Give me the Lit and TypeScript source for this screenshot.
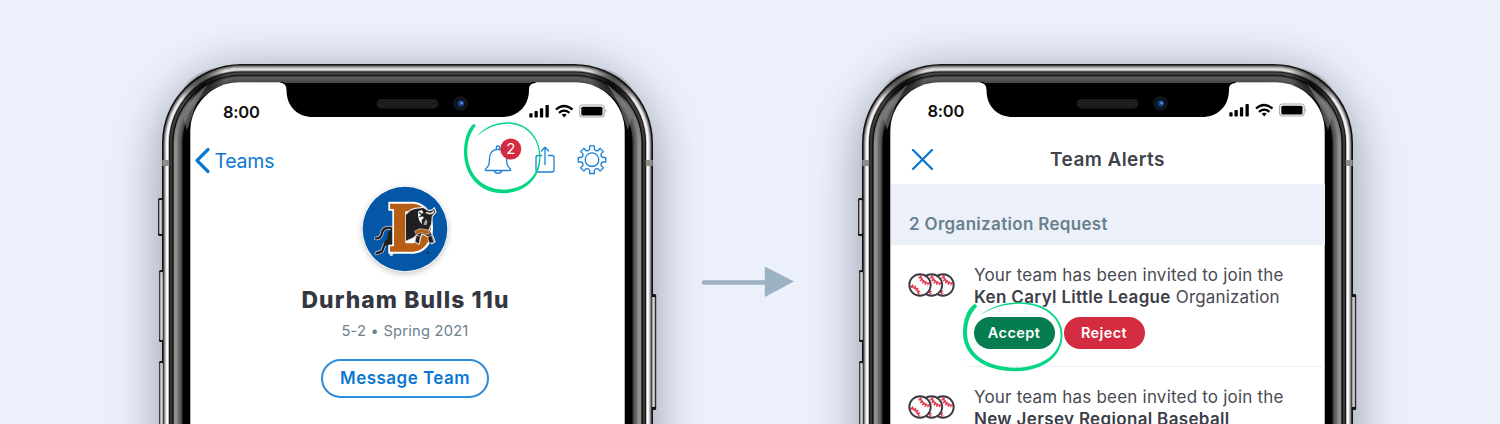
import { LitElement, html, css, svg } from "lit";
import { customElement, property } from "lit/decorators.js";

const BASE = css`
  :host { display: block; box-sizing: border-box; font-family: Inter, "Liberation Sans", sans-serif; white-space: nowrap; }
  * { box-sizing: border-box; }
  svg { display: block; overflow: visible; }
`;

// Bezel bands from outside to inside: x inset, y inset, top colour, side colour
const BANDS: [number, number, string, string][] = [
  [0, 0, "#151515", "#111111"],
  [1.6, 1.6, "#6c6a68", "#77757a"],
  [2.6, 2.4, "#93918f", "#a9a7a6"],
  [3.4, 3.6, "#cccac8", "#d8d8d8"],
  [4.4, 5, "#e4e3e2", "#ffffff"],
  [6.2, 6.6, "#8a8a8a", "#c0c0c0"],
  [6.9, 7.4, "#1a1a1a", "#101010"],
  [7.8, 8.4, "#4a4a4a", "#373737"],
  [10.3, 10.6, "#1c1c1c", "#050505"],
  [11.6, 12, "#3f3f3f", "#8b8b8b"],
  [13.2, 13, "#555555", "#929292"],
  [14.8, 14, "#5a5a5a", "#7d7d7d"],
  [16.2, 15, "#555555", "#6a6a6a"],
  [17.6, 16, "#505050", "#575757"],
  [19, 17, "#4c4c4c", "#444444"],
  [20.4, 18.1, "#161616", "#000000"],
  [28.3, 18.3, "#ffffff", "#ffffff"],
];

@customElement("phone-frame")
export class PhoneFrame extends LitElement {
  static styles = [BASE, css`
    :host { width: 491px; height: 700px; display: grid; flex: none; }
    .bezel, .screen { grid-area: 1 / 1; }
    .bezel { width: 491px; height: 700px; border-radius: 84px; box-shadow: 0 16px 52px rgba(62, 72, 92, .36), 0 0 40px rgba(62, 72, 92, .2); }
    .screen { padding: 18px 28px; position: relative; }
  `];

  render() {
    const last = BANDS.length - 1;
    return html`
      <svg class="bezel" viewBox="0 0 491 700">
        <defs>
          ${BANDS.map(([, , top, side], i) => svg`
            <linearGradient id="b${i}" gradientUnits="userSpaceOnUse" x1="0" y1="8" x2="0" y2="80">
              <stop offset="0" stop-color=${top}></stop><stop offset="1" stop-color=${side}></stop>
            </linearGradient>`)}
          <linearGradient id="key" x1="0" x2="1"><stop offset="0" stop-color="#777"></stop><stop offset=".5" stop-color="#d4d4d0"></stop><stop offset="1" stop-color="#999"></stop></linearGradient>
          <radialGradient id="shade"><stop offset="0" stop-color="#000" stop-opacity=".85"></stop><stop offset=".45" stop-color="#000" stop-opacity=".55"></stop><stop offset="1" stop-color="#000" stop-opacity="0"></stop></radialGradient>
          <pattern id="mesh" width="2" height="2" patternUnits="userSpaceOnUse"><rect width="2" height="2" fill="#191919"></rect><rect width="1" height="1" fill="#2a2a2a"></rect></pattern>
        </defs>
        ${[[-4, 134, 38], [-3, 206, 72], [-3, 297, 72]].map(([x, y, h]) => svg`
          <rect x=${x} y=${y} width="6" height=${h} rx="1.5" fill="#161616"></rect>`)}
        <rect x="488" y="230" width="6.2" height="116" rx="1.5" fill="#161616"></rect>
        ${BANDS.slice(0, last).map(([dx, dy], i) => {
          const r = 79 - dx * 1.02;
          return svg`<rect x=${dx} y=${dy} width=${491 - 2 * dx} height=${700 - 2 * dy} rx=${r} ry=${r + (dx - dy)} fill="url(#b${i})"></rect>`;
        })}
        ${[[-3.2, 136, 34], [-2.4, 208, 68], [-2.4, 299, 68], [489.8, 233, 110]].map(([x, y, h]) => svg`
          <rect x=${x} y=${y} width="3.400" height=${h} rx="1" fill="url(#key)"></rect>`)}
        <ellipse cx="41" cy="21" rx="26" ry="13" fill="url(#shade)" transform="rotate(-32 41 21)"></ellipse>
        <ellipse cx="450" cy="21" rx="26" ry="13" fill="url(#shade)" transform="rotate(32 450 21)"></ellipse>
        <path d="M21 53C26 39 34 30 46 20C40 29 34 38 30 52L25 66Z" fill="#8c8c8c" opacity=".55"></path>
        <path d="M470 53C465 39 457 30 445 20C451 29 457 38 461 52L466 66Z" fill="#8c8c8c" opacity=".55"></path>
        <rect x="28.300" y="18.300" width="434.400" height="670" rx="49" fill="#fff"></rect>
        <rect x=".3" y="96" width="7" height="6" fill="#8f8d8c"></rect>
        <rect x="483.700" y="96" width="7" height="6" fill="#8f8d8c"></rect>
        <path d="M118 18H373.500V19Q367 19 367 25.500C367 43 355 53 340 53H151C136 53 124.500 43 124.500 26Q124.500 19 118 18.500Z" fill="#000"></path>
        <path d="M122 18.200H369.500" stroke="#484848" stroke-width="1.400"></path>
        <rect x="214.500" y="35" width="62" height="9.500" rx="4.700" fill="url(#mesh)"></rect>
        <circle cx="298.500" cy="39.500" r="7.300" fill="#13161b"></circle>
        <circle cx="298.500" cy="39.500" r="5" fill="#0a1224"></circle>
        <circle cx="298.800" cy="39.500" r="3.200" fill="#173c78"></circle>
        <circle cx="299.600" cy="39" r="1.500" fill="#4b8de0"></circle>
      </svg>
      <div class="screen"><slot></slot></div>
    `;
  }
}

@customElement("status-bar")
export class StatusBar extends LitElement {
  @property() time = "8:00";
  static styles = [BASE, css`
    :host { height: 60px; display: flex; align-items: center; justify-content: space-between; padding: 0 18px 0 33px; }
    .time { font-size: 16.500px; line-height: 20px; font-weight: 600; color: #111; letter-spacing: -.25px; }
    .icons { width: 78px; height: 16px; margin-top: -3px; }
  `];
  render() {
    return html`
      <span class="time">${this.time}</span>
      <svg class="icons" viewBox="0 0 78 16">
        <rect x="0.300" y="10.200" width="3.300" height="4.300" rx=".8"></rect>
        <rect x="5.500" y="8" width="3.300" height="6.500" rx=".8"></rect>
        <rect x="10.900" y="5.200" width="3.300" height="9.300" rx=".8"></rect>
        <rect x="16.500" y="2" width="3.300" height="12.500" rx=".8"></rect>
        <g fill="none" stroke="#000" stroke-width="2.300">
          <path d="M27 6.500Q35 -.5 43.500 6.500"></path><path d="M30 9.800Q35.200 5.500 40.500 9.800"></path>
        </g>
        <path d="M32.700 11.600Q35.200 9.800 37.700 11.600L35.200 14.400Z"></path>
        <rect x="50.600" y="2" width="24.600" height="12" rx="3" fill="none" stroke="#a9a9a9" stroke-width="1.100"></rect>
        <rect x="52.300" y="3.700" width="21.200" height="8.700" rx="1.500"></rect>
        <path d="M76.300 6Q78.200 8 76.300 10Z" fill="#a9a9a9"></path>
      </svg>`;
  }
}

@customElement("bulls-logo")
export class BullsLogo extends LitElement {
  static styles = [BASE, css`
    :host { width: 86px; height: 86px; border-radius: 50%; box-shadow: 0 2px 6px rgba(0, 0, 0, .22); }
  `];
  render() {
    return html`
      <svg width="86" height="86" viewBox="67 32 258 258">
        <circle cx="196" cy="161" r="127" fill="#0456a6"></circle>
        <g stroke-linejoin="round" stroke-linecap="round">
          <g fill="none" stroke="#d5d8dd" stroke-width="11">
            <path d="M158 160C145 153 130 158 127 172C125 184 119 190 109 189"></path>
            <path d="M160 192L135 207L127 228L110 234"></path><path d="M158 212L152 224L155 237"></path>
          </g>
          <g fill="none" stroke="#221f20" stroke-width="7">
            <path d="M158 160C145 153 130 158 127 172C125 184 119 190 109 189"></path>
            <path d="M160 192L135 207L127 228L110 234"></path>
          </g>
          <path d="M158 158L146 170L143 190L132 202L137 212L158 208Z" fill="#221f20"></path>
          <path d="M146 79H216C257 79 280 111 280 157C280 205 256 235 216 235H146V208H158V106H146Z" fill="#fff"></path>
          <path d="M151 85H216C252 85 274 114 274 157C274 201 251 229 216 229H151V213H163V101H151Z" fill="#b65d16"></path>
          <path d="M197 108H222C238 115 246 134 246 157C246 181 237 204 217 204H197Z" fill="#fff"></path>
          <path d="M202 114Q209 103 226 99L250 96L268 106Q280 105 284 97L289 110L278 123L276 146L269 162L281 185L286 200L276 205L264 184L246 176L238 207L229 202L230 180L221 188L202 195Z" fill="#221f20" stroke="#e9e5df" stroke-width="3.500"></path>
          <path d="M199 118L216 107V187L199 196Z" fill="#221f20"></path>
          <path d="M236 108L246 104L251 111L244 119L253 127L246 134L247 147L239 136L235 121Z" fill="#fff"></path>
          <path d="M240 112L248 120L241 124M254 124L263 136" fill="none" stroke="#221f20" stroke-width="4"></path>
          <path d="M261 112Q277 119 282 108" fill="none" stroke="#ddd" stroke-width="5"></path>
          <path d="M258 131L264 139L260 150L251 148Z" fill="#a9a6a2"></path>
          <path d="M226 167L240 160L267 164L269 176L252 177L246 171L231 178Z" fill="#b65d16" stroke="#ddd" stroke-width="2"></path>
          <path d="M230 181L226 200L238 206L242 184ZM264 185L268 203L283 202L276 181Z" fill="#221f20" stroke="#ddd" stroke-width="2"></path>
        </g>
        <circle cx="264" cy="232" r="4.500" fill="#17304f"></circle>
      </svg>`;
  }
}

@customElement("team-screen")
export class TeamScreen extends LitElement {
  static styles = [BASE, css`
    :host { width: 435px; }
    .nav { height: 38px; display: flex; align-items: center; padding: 0 18px 0 4px; color: #0b77d1; }
    .back { display: flex; align-items: center; gap: 4.500px; font-size: 19.500px; letter-spacing: -.25px; flex: 1; }
    .profile { display: flex; flex-direction: column; align-items: center; padding: 6px 5px 0 0; }
    .name { margin-top: 13.500px; font-size: 22.800px; line-height: 28px; font-weight: 800; color: #353740; letter-spacing: 1.120px; margin-right: -1px; }
    .record { margin-top: 7.500px; font-size: 14.700px; line-height: 20px; color: #6c818e; letter-spacing: .22px; }
    .message { margin-top: 18px; width: 168px; height: 38.500px; border: 2px solid #2f8cd9; border-radius: 20px; background: #fff; color: #0b77d1; font: 600 17px/35px Inter, sans-serif; letter-spacing: .46px; padding: 0; text-align: center; }
    .mark { position: absolute; left: 0; top: 0; width: 491px; height: 360px; pointer-events: none; }
  `];
  render() {
    return html`
      <status-bar></status-bar>
      <div class="nav">
        <span class="back">
          <svg width="16" height="26" viewBox="0 0 16 26"><path d="M14 1.500L3 12.500L14 23.500" fill="none" stroke="#0b77d1" stroke-width="3.200" stroke-linecap="round" stroke-linejoin="round"></path></svg>Teams</span>
        <svg width="123" height="38" viewBox="484 142 123 38" fill="none" stroke="#1c80d5" stroke-width="1.300" stroke-linejoin="round" stroke-linecap="round">
          <path d="M496.300 149.500V147.600Q496.300 146 498 146T499.800 147.600V149.500"></path>
          <path d="M485.700 170.500Q485 170 485.700 168.800C489.500 165.500 489.200 163.500 489.500 158C490 152.500 493 149.300 498 149.300S506 152.500 506.500 158C506.800 163.500 506.500 165.500 510.300 168.800Q511 170 510.300 170.500Z"></path>
          <path d="M494.300 170.800Q495 173.300 498 173.300T501.700 170.800"></path>
          <path d="M541.500 155.500H538Q536 155.500 536 157.500V170Q536 172 538 172H552Q554 172 554 170V157.500Q554 155.500 552 155.500H548.500M545 164.500V147.500M541.300 151L545 147.200L548.700 151"></path>
          <circle cx="592" cy="159.700" r="6.800"></circle>
          <path d=${gearPath(592, 159.7, 11, 14, 8)}></path>
          <circle cx="510.800" cy="149" r="10.500" fill="#d32b40" stroke="none"></circle>
          <text x="510.800" y="154.300" text-anchor="middle" font-size="15" fill="#fff" stroke="none">2</text>
        </svg>
      </div>
      <div class="profile">
        <bulls-logo></bulls-logo>
        <div class="name">Durham Bulls 11u</div>
        <div class="record">5-2 • Spring 2021</div>
        <button class="message">Message Team</button>
      </div>
      <svg class="mark" viewBox="162 64 491 360"><path fill="#04d684" d="M473.500 124C467 129 464 141 464 152C464 176 480 193.300 503 193.300C526 193 541 178 540.500 156C540 136 526 122 507 122.300C493 122.500 482 129.500 477 136.500C483 130.500 494 124 507 123.700C525 123.500 539 137 539.200 156C539.400 176 524 189.300 503 189.600C482 189 467.500 174 467.300 152C467.300 140 471 132 475.500 126Q475.800 124 473.500 124Z"></path></svg>
    `;
  }
}

// Outline of a cog: flat teeth on the outer radius, rounded valleys on the inner one
function gearPath(cx: number, cy: number, inner: number, outer: number, teeth: number) {
  const step = (Math.PI * 2) / teeth;
  const pt = (r: number, a: number) => `${(cx + r * Math.cos(a)).toFixed(2)} ${(cy + r * Math.sin(a)).toFixed(2)}`;
  let d = "";
  for (let i = 0; i < teeth; i++) {
    const a = i * step;
    d += `${i ? "L" : "M"}${pt(inner, a - 0.2)}L${pt(outer, a - 0.17)}L${pt(outer, a + 0.17)}L${pt(inner, a + 0.2)}`;
    d += `Q${pt(inner - 2, a + step / 2)} ${pt(inner, a + step - 0.2)}`;
  }
  return d + "Z";
}

@customElement("alert-row")
export class AlertRow extends LitElement {
  @property() team = "";
  @property() tail = "";
  static styles = [BASE, css`
    :host { height: 122px; display: grid; grid-template-columns: 66px 1fr; padding-left: 10px; }
    .balls { margin-top: 28px; margin-left: 8px; }
    .body { padding: 18.500px 0 0 8px; border-bottom: 1.500px solid #e8f0f5; }
    .line { font-size: 17px; line-height: 22.200px; color: #484a52; letter-spacing: .2px; }
    .team { font-weight: 600; color: #3c3e47; letter-spacing: .33px; }
    .tail { letter-spacing: .16px; }
    .actions { display: flex; gap: 9px; margin: 9px 0 0 -.5px; }
    .btn { width: 81px; height: 32.500px; border: 0; padding: 0; border-radius: 17px; color: #fff; font: 600 14.500px/32px Inter, sans-serif; letter-spacing: .4px; }
    .accept { background: #067d50; }
    .reject { background: #d32b40; }
  `];
  render() {
    const ball = (cx: number) => svg`
      <circle cx=${cx} cy="12" r="10.700" fill="#fff" stroke="#3c3b42" stroke-width="1.900"></circle>
      <g fill="none" stroke="#e23a50">
        <g stroke-width="1.300"><path d="M${cx - 10} 13Q${cx - 1.5} 14.500 ${cx - 1} 22"></path><path d="M${cx} 2Q${cx + 1.5} 9.500 ${cx + 10} 11"></path></g>
        <g stroke-width="3.600" stroke-dasharray="1.500 1.300"><path d="M${cx - 8.5} 13Q${cx - 2} 15 ${cx - 1} 21"></path><path d="M${cx} 3.500Q${cx + 1.5} 9.500 ${cx + 8.5} 11"></path></g>
      </g>`;
    return html`
      <svg class="balls" width="47" height="24" viewBox="0 0 47 24">${ball(35)}${ball(23.5)}${ball(12)}</svg>
      <div class="body">
        <div class="line">Your team has been invited to join the</div>
        <div class="line"><span class="team">${this.team}</span> <span class="tail">${this.tail}</span></div>
        <div class="actions"><button class="btn accept">Accept</button><button class="btn reject">Reject</button></div>
      </div>`;
  }
}

@customElement("alerts-screen")
export class AlertsScreen extends LitElement {
  static styles = [BASE, css`
    :host { width: 435px; }
    status-bar { margin-top: -1px; padding-left: 37.500px; padding-right: 18px; }
    .head { height: 43px; display: grid; grid-template-columns: 22px 1fr 22px; align-items: center; padding: 0 22px 7px; }
    .title { text-align: center; font-size: 19px; font-weight: 600; line-height: 24px; color: #41434b; letter-spacing: .42px; padding-top: 2px; }
    .section { height: 61px; margin: 0 .5px; padding: 28px 0 0 18.500px; background: #ecf0f9; font-size: 17px; line-height: 25px; font-weight: 600; color: #69808d; letter-spacing: .32px; }
    .mark { position: absolute; left: 0; top: 0; width: 491px; height: 360px; pointer-events: none; }
  `];
  render() {
    return html`
      <status-bar></status-bar>
      <div class="head">
        <svg width="22" height="22" viewBox="0.500 -0.500 22 22"><path d="M1.500 1.500L20.500 20.500M20.500 1.500L1.500 20.500" stroke="#0b77d1" stroke-width="2.300" stroke-linecap="round"></path></svg>
        <div class="title">Team Alerts</div>
      </div>
      <div class="section">2 Organization Request</div>
      <alert-row team="Ken Caryl Little League" tail="Organization"></alert-row>
      <alert-row team="New Jersey Regional Baseball"></alert-row>
      <svg class="mark" viewBox="862 64 491 360"><path fill="#04d684" d="M974.500 304C966.500 309 963 321 963 333C963 356 985 371.300 1015 371.300C1044 371 1062.500 356 1062.500 335C1062.500 316 1044 302 1020 302.200C1003 302.400 988 308 979 316C989 309 1003 303.800 1020 303.700C1043 303.800 1060.500 317 1060.700 335C1060.700 354 1042 367.500 1015 367.700C986 367 967.300 354 967 333C967 321 971 313 976.800 307Q977 304 974.500 304Z"></path></svg>
    `;
  }
}

@customElement("app-root")
export class AppRoot extends LitElement {
  static styles = [BASE, css`
    :host { width: 1500px; height: 424px; overflow: hidden; background: #ecf0fa; display: flex; align-items: flex-start; padding: 64px 0 0 162px; }
    .arrow { flex: none; margin: 201px 68px 0 48px; }
  `];
  render() {
    return html`
      <phone-frame><team-screen></team-screen></phone-frame>
      <svg class="arrow" width="93" height="34" viewBox="0 0 93 34"><path d="M3 17.500H66" stroke="#9db1c5" stroke-width="4.600" stroke-linecap="round"></path><path d="M63.800 1.500L93 16.500L63.800 32Z" fill="#9db1c5"></path></svg>
      <phone-frame><alerts-screen></alerts-screen></phone-frame>
    `;
  }
}
